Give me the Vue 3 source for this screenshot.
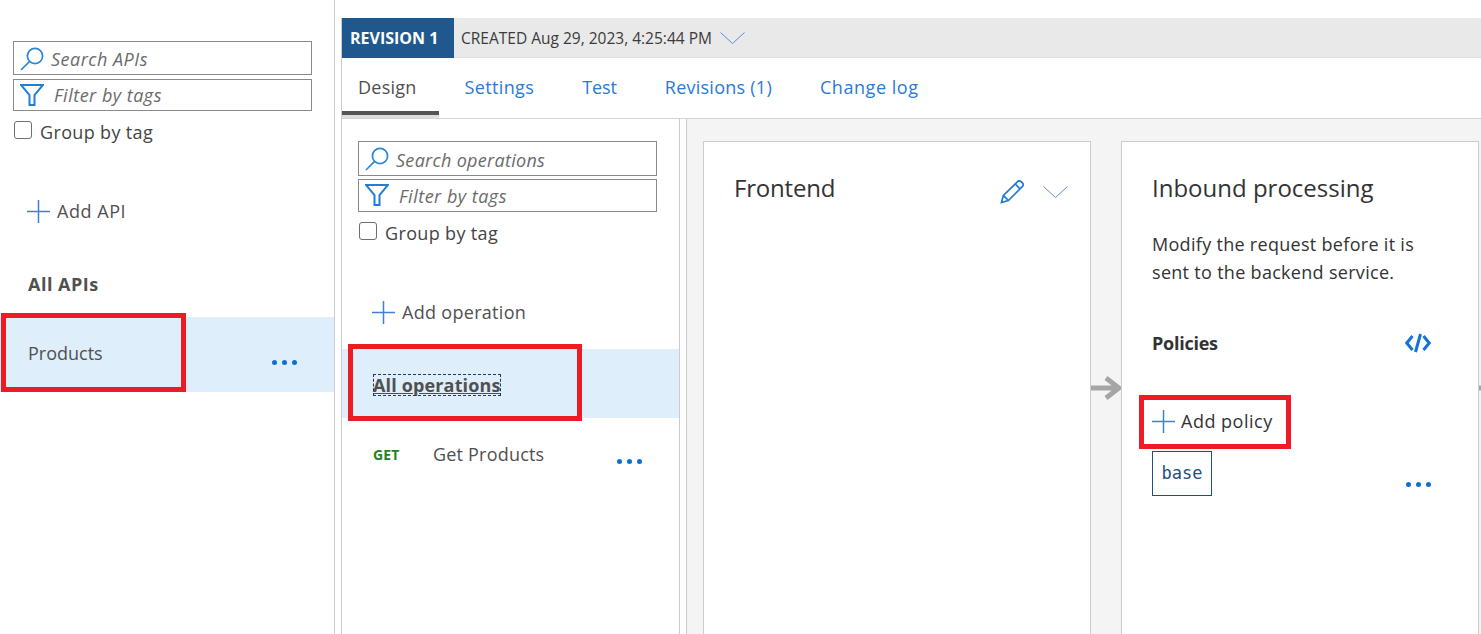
<template>
  <div class="page">
    <aside class="api-list">
      <div class="filter-box search">
        <svg class="ico" viewBox="0 0 24 24"><circle cx="15" cy="9" r="7.6" /><path d="M9.6 14.4 1 23" /></svg>
        <span>Search APIs</span>
      </div>
      <div class="filter-box tags">
        <svg class="ico funnel" viewBox="0 0 24 24"><path d="M1 2h22l-8.5 10v10h-5V12z" /></svg>
        <span>Filter by tags</span>
      </div>
      <label class="group-tag"><input type="checkbox" /><span>Group by tag</span></label>
      <div class="add-row add-api">
        <svg class="plus" viewBox="0 0 23 23"><path d="M11.5 0v23M0 11.5h23" /></svg>
        <span>Add API</span>
      </div>
      <div class="all-apis">All APIs</div>
      <div class="api-row">
        <span>Products</span>
        <span class="dots"><i></i><i></i><i></i></span>
      </div>
    </aside>

    <main class="editor">
      <div class="revision-bar">
        <strong class="rev-badge">REVISION 1</strong>
        <span class="rev-created">CREATED Aug 29, 2023, 4:25:44 PM</span>
        <svg class="chev" viewBox="0 0 25 12"><path d="M.5.5 12.5 11.5 24.5.5" /></svg>
      </div>
      <nav class="tabs">
        <a v-for="t in tabs" :key="t" :class="['tab', { active: t === 'Design' }]">{{ t }}</a>
      </nav>
      <div class="workspace">
        <section class="ops">
          <div class="filter-box search">
            <svg class="ico" viewBox="0 0 24 24"><circle cx="15" cy="9" r="7.6" /><path d="M9.6 14.4 1 23" /></svg>
            <span>Search operations</span>
          </div>
          <div class="filter-box tags">
            <svg class="ico funnel" viewBox="0 0 24 24"><path d="M1 2h22l-8.5 10v10h-5V12z" /></svg>
            <span>Filter by tags</span>
          </div>
          <label class="group-tag"><input type="checkbox" /><span>Group by tag</span></label>
          <div class="add-row add-op">
            <svg class="plus" viewBox="0 0 23 23"><path d="M11.5 0v23M0 11.5h23" /></svg>
            <span>Add operation</span>
          </div>
          <div class="all-ops"><span class="focused">All operations</span></div>
          <div class="op-row">
            <span class="verb">GET</span>
            <span class="op-name">Get Products</span>
            <span class="dots"><i></i><i></i><i></i></span>
          </div>
        </section>

        <div class="canvas">
          <section class="card frontend">
            <div class="card-head">
              <h2>Frontend</h2>
              <svg class="pencil" viewBox="0 0 24 24">
                <path d="M1.500 22.500 3.400 15.400 17.600 1.600c1-.9 2.600-.9 3.600.1l1.200 1.200c1 1 1 2.500.1 3.500L8.400 20.500zM15.200 4 20 8.800M3.400 15.400l5 5.100" />
              </svg>
              <svg class="chev big" viewBox="0 0 25 12"><path d="M.5.5 12.500 11.500 24.500.5" /></svg>
            </div>
          </section>
          <svg class="flow-arrow" viewBox="0 0 30 24"><path d="M0 12h27M15 2l13 10-13 10" /></svg>
          <section class="card inbound">
            <h2>Inbound processing</h2>
            <p>Modify the request before it is sent to the backend service.</p>
            <div class="policies-head">
              <strong>Policies</strong>
              <svg class="code" viewBox="0 0 26 20"><path d="M7.500 3 1.800 10l5.700 7M18.500 3l5.700 7-5.700 7M15.500 1l-5 18" /></svg>
            </div>
            <div class="add-row add-policy">
              <svg class="plus" viewBox="0 0 23 23"><path d="M11.500 0v23M0 11.500h23" /></svg>
              <span>Add policy</span>
            </div>
            <div class="policy-row">
              <code class="base-tag">base</code>
              <span class="dots"><i></i><i></i><i></i></span>
            </div>
          </section>
          <svg class="flow-arrow next" viewBox="0 0 3 24"><path d="M0 12h3" /></svg>
        </div>
      </div>
    </main>

    <div class="callout c-products"></div>
    <div class="callout c-ops"></div>
    <div class="callout c-policy"></div>
  </div>
</template>

<script setup>
const tabs = ['Design', 'Settings', 'Test', 'Revisions (1)', 'Change log'];
</script>

<style>
html,
body {
  margin: 0;
  background: #fff;
}
</style>

<style scoped>
.page {
  position: relative;
  display: flex;
  height: 634px;
  overflow: hidden;
  background: #fff;
  color: #505050;
  font-family: "Open Sans", "Noto Sans", sans-serif;
  font-size: 18px;
}

.api-list {
  width: 334px;
  flex: none;
  padding-top: 41px;
  border-right: 1px solid #ccc;
}

.filter-box {
  display: flex;
  align-items: center;
  box-sizing: border-box;
  width: 299px;
  margin-left: 13px;
  border: 1px solid #8a8a8a;
  font-style: italic;
  color: #6b6b6b;
  letter-spacing: 0.5px;
}

.filter-box.search {
  height: 34px;
  gap: 7px;
  padding: 2px 0 0 6px;
}

.filter-box.tags {
  height: 32px;
  margin-top: 4px;
  gap: 10px;
  padding-left: 6px;
}

.ico {
  width: 24px;
  height: 24px;
  flex: none;
  margin-top: -1px;
  fill: none;
  stroke: #2b88d8;
  stroke-width: 1.7;
}

.funnel {
  stroke: #1f7fd8;
  stroke-width: 2;
}

.group-tag {
  display: flex;
  align-items: center;
  gap: 8px;
  height: 24px;
  margin: 9px 0 0 13px;
  letter-spacing: 0.35px;
  color: #444;
}

.group-tag input {
  appearance: none;
  width: 18px;
  height: 18px;
  margin: 0 0 4px 1px;
  box-sizing: border-box;
  border: 1.5px solid #6f6f6f;
  border-radius: 3px;
  background: #fff;
}

.add-row {
  display: flex;
  align-items: center;
  gap: 7px;
  height: 24px;
}

.plus {
  width: 23px;
  height: 23px;
  flex: none;
  fill: none;
  stroke: #3b82d6;
  stroke-width: 1.5;
}

.add-api {
  margin: 55px 0 0 27px;
  letter-spacing: 0.55px;
}

.all-apis {
  margin: 49px 0 0 28px;
  height: 24px;
  line-height: 24px;
  font-weight: 700;
  letter-spacing: 0.5px;
}

.api-row {
  position: relative;
  height: 75px;
  margin-top: 21px;
  padding: 24px 0 0 28px;
  box-sizing: border-box;
  line-height: 24px;
  background: #deeefa;
}

.dots {
  display: flex;
  gap: 5px;
}

.dots i {
  width: 5px;
  height: 5px;
  border-radius: 50%;
  background: #0f6fd0;
}

.api-row .dots {
  position: absolute;
  left: 272px;
  top: 43px;
}

.editor {
  flex: 1;
  min-width: 0;
  margin: 18px 0 0 6px;
  border-left: 1px solid #ccc;
  display: flex;
  flex-direction: column;
}

.revision-bar {
  display: flex;
  align-items: center;
  height: 40px;
  flex: none;
  box-sizing: border-box;
  background: #e9e9e9;
  border-bottom: 1px solid #ddd;
  font-size: 15.5px;
}

.rev-badge {
  align-self: stretch;
  width: 112px;
  box-sizing: border-box;
  padding-left: 8px;
  margin-bottom: -1px;
  font-size: 16px;
  line-height: 40px;
  background: #1e588e;
  color: #fff;
}

.rev-created {
  margin-left: 7px;
  color: #3b3b3b;
}

.chev {
  width: 25px;
  height: 12px;
  margin-left: 8px;
  fill: none;
  stroke: #5b8fd0;
  stroke-width: 1;
}

.tabs {
  display: flex;
  height: 61px;
  flex: none;
  box-sizing: border-box;
  border-bottom: 1px solid #d4d4d4;
}

.tab {
  padding-top: 17px;
  margin-right: 48px;
  color: #2a7ad6;
  letter-spacing: 0.35px;
}

.tab:nth-child(3) {
  letter-spacing: -0.1px;
}

.tab:nth-child(4) {
  letter-spacing: 0.25px;
}

.tab:nth-child(5) {
  letter-spacing: 0.55px;
}

.tab.active {
  color: #505050;
  position: relative;
  padding-left: 16px;
  letter-spacing: 0.25px;
}

.tab.active::after {
  content: "";
  position: absolute;
  left: 0;
  right: -22px;
  bottom: 3px;
  height: 4px;
  background: #555;
  box-shadow: 0 3px 0 #ddd;
}

.workspace {
  flex: 1;
  display: flex;
  min-height: 0;
}

.ops {
  width: 337px;
  flex: none;
  padding-top: 22px;
  border-right: 1px solid #ccc;
}

.ops .filter-box {
  margin-left: 16px;
  letter-spacing: 0.3px;
}

.ops .group-tag {
  margin: 9px 0 0 16px;
}

.ops .filter-box.search {
  height: 35px;
}

.ops .filter-box.tags {
  margin-top: 3px;
  height: 33px;
  letter-spacing: 0.5px;
}

.add-op {
  margin: 55px 0 0 30px;
  letter-spacing: 0.3px;
}

.all-ops {
  height: 69px;
  margin-top: 25px;
  padding: 3px 0 0 31px;
  box-sizing: border-box;
  display: flex;
  align-items: center;
  background: #deeefa;
  font-weight: 700;
  text-decoration: underline;
  letter-spacing: 0.15px;
}

.focused {
  outline: 1px dashed #1f3a5c;
  outline-offset: -1px;
  line-height: 22px;
}

.op-row {
  position: relative;
  display: flex;
  align-items: center;
  height: 24px;
  margin-top: 24px;
  padding-left: 31px;
  letter-spacing: 0.2px;
}

.verb {
  width: 60px;
  font-size: 14px;
  font-weight: 700;
  color: #22851c;
  letter-spacing: 0.1px;
}

.op-row .dots {
  position: absolute;
  left: 275px;
  top: 17px;
}

.canvas {
  flex: 1;
  display: flex;
  align-items: flex-start;
  margin-left: 6px;
  padding: 22px 0 0 16px;
  background: #f4f4f4;
  border-left: 1px solid #ccc;
  min-width: 0;
}

.card {
  flex: none;
  box-sizing: border-box;
  height: 600px;
  padding: 31px 22px 0 30px;
  background: #fff;
  border: 1px solid #ccc;
}

.frontend {
  width: 388px;
}

.inbound {
  width: 358px;
  color: #333;
}

.card-head {
  display: flex;
  align-items: flex-start;
}

.card h2 {
  margin: 0;
  font-size: 24px;
  font-weight: 400;
  line-height: 30px;
  color: #333;
}

.card-head h2 {
  flex: 1;
  letter-spacing: -0.2px;
}

.pencil {
  width: 24px;
  height: 24px;
  margin-top: 7px;
  fill: none;
  stroke: #2378d6;
  stroke-width: 1.7;
}

.chev.big {
  margin: 13px 0 0 19px;
}

.flow-arrow {
  width: 30px;
  height: 24px;
  flex: none;
  margin-top: 235px;
  fill: none;
  stroke: #a5a5a5;
  stroke-width: 5;
}

.flow-arrow.next {
  width: 3px;
}

.inbound p {
  margin: 27px 0 0;
  max-width: 275px;
  line-height: 28px;
  letter-spacing: 0.3px;
}

.policies-head {
  display: flex;
  align-items: center;
  justify-content: space-between;
  margin: 44px 25px 0 0;
  height: 26px;
  letter-spacing: -0.25px;
}

.code {
  width: 26px;
  height: 20px;
  fill: none;
  stroke: #1473d6;
  stroke-width: 3;
}

.add-policy {
  margin-top: 53px;
  gap: 6px;
  letter-spacing: 0.5px;
}

.policy-row {
  display: flex;
  align-items: center;
  justify-content: space-between;
  margin: 18px 25px 0 0;
}

.base-tag {
  box-sizing: border-box;
  width: 60px;
  height: 45px;
  line-height: 43px;
  text-align: center;
  border: 1px solid #1e4f80;
  color: #1e4f80;
  font-family: "DejaVu Sans Mono", "Liberation Mono", monospace;
  font-size: 17px;
}

.policy-row .dots {
  margin-top: 21px;
}

.callout {
  position: absolute;
  box-sizing: border-box;
  border: 5px solid #ed1c24;
}

.c-products {
  left: 1px;
  top: 313px;
  width: 185px;
  height: 79px;
}

.c-ops {
  left: 348px;
  top: 344px;
  width: 234px;
  height: 77px;
}

.c-policy {
  left: 1139px;
  top: 395px;
  width: 152px;
  height: 54px;
}
</style>
